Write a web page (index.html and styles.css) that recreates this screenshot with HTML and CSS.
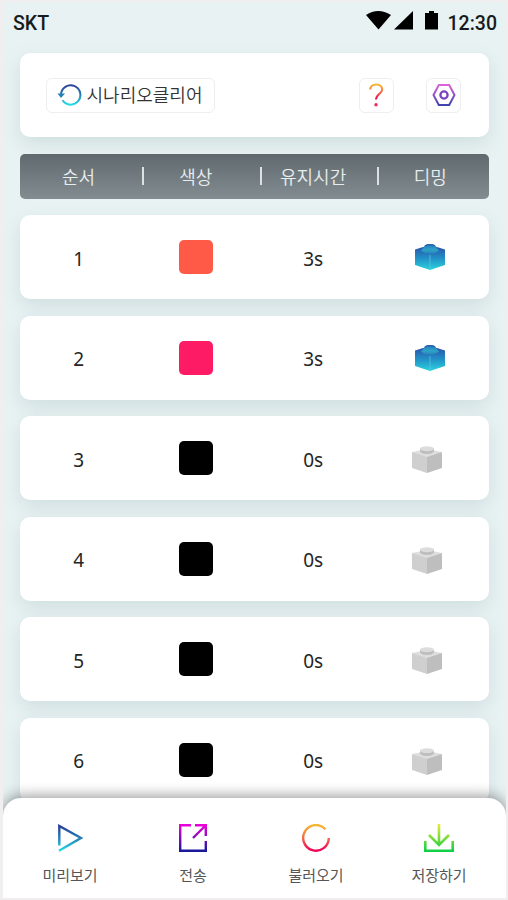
FILE: index.html
```
<!DOCTYPE html>
<html lang="ko">
<head>
<meta charset="utf-8">
<title>시나리오</title>
<link rel="stylesheet" href="styles.css">
</head>
<body>
<svg class="defs" aria-hidden="true">
  <defs>
    <linearGradient id="blue" x1="0" y1="0" x2="0" y2="1"><stop offset="0" stop-color="#2b3f99"/><stop offset=".5" stop-color="#2680b5"/><stop offset="1" stop-color="#20dce8"/></linearGradient>
    <linearGradient id="warm" x1="0" y1="0" x2="0" y2="1"><stop offset="0" stop-color="#f5b82e"/><stop offset=".5" stop-color="#f36a45"/><stop offset="1" stop-color="#f00058"/></linearGradient>
    <linearGradient id="violet" x1="0" y1="0" x2="0" y2="1"><stop offset="0" stop-color="#ea00d9"/><stop offset="1" stop-color="#18189b"/></linearGradient>
    <linearGradient id="soft" x1="0" y1="0" x2="0" y2="1"><stop offset="0" stop-color="#dd63da"/><stop offset="1" stop-color="#3f43b0"/></linearGradient>
    <linearGradient id="green" gradientUnits="userSpaceOnUse" x1="0" y1="0" x2="0" y2="28"><stop offset="0" stop-color="#ece83c"/><stop offset=".5" stop-color="#7bdb3d"/><stop offset="1" stop-color="#08cf49"/></linearGradient>
    <linearGradient id="brick" gradientUnits="userSpaceOnUse" x1="0" y1="6" x2="0" y2="28"><stop offset="0" stop-color="#2b5aad"/><stop offset=".45" stop-color="#218fc6"/><stop offset="1" stop-color="#2cd3dd"/></linearGradient>
    <linearGradient id="stud" x1="0" y1="0" x2="0" y2="1"><stop offset="0" stop-color="#2c70b8"/><stop offset=".6" stop-color="#2ba5c8"/><stop offset="1" stop-color="#2b84bd"/></linearGradient>
    <symbol id="brick-on" viewBox="0 0 32 30">
      <path d="M1 7.5 9 5h14l8 2.5V23l-15 5-15-5z" fill="url(#brick)"/>
      <path d="M7 8.5Q9 7 10 4.5 11 2 16 2t6 2.5q1 2.5 3 4-3 3-9 3t-9-3z" fill="url(#stud)"/>
      <path d="M11 3.7q5-2 10 0" fill="none" stroke="#2760ac" stroke-width="1.2"/>
      <path d="M16 13v14" stroke="#62c9e2" stroke-width=".7"/>
    </symbol>
    <symbol id="brick-off" viewBox="0 0 32 30">
      <path d="M1 8 16 5l15 3-15 6z" fill="#dedede"/>
      <path d="m1 8 15 5v16L1 24z" fill="#cfcfcf"/>
      <path d="m31 8-15 5v16l15-5z" fill="#bebebe"/>
      <path d="M9 4.5v3q2 2.5 7 2.5t7-2.5v-3z" fill="#bdbdbd"/>
      <ellipse cx="16" cy="4.8" rx="7" ry="2.5" fill="#dcdcdc"/>
    </symbol>
  </defs>
</svg>
<div class="screen">
  <header class="status">
    <span>SKT</span>
    <div class="signals">
      <svg width="80" height="24" viewBox="0 0 80 24"><path d="M2 6q12-8 25 0L14.500 20.500zM30 20.500 49 2v18.500zM61 4h4V2h5v2h4v16.500H61z"/></svg>
      <span>12:30</span>
    </div>
  </header>
  <section class="toolbar card">
    <button class="clear">
      <svg width="25" height="24" viewBox="0 0 25 24" fill="none" stroke="url(#blue)" stroke-width="2"><path d="M4 11.500A9.700 9.700 0 1 1 5.600 17.300"/><path d="M.5 10.500h7.500L4 15z" fill="#2680b5" stroke="none"/></svg>
      <span>시나리오클리어</span>
    </button>
    <button class="square help">
      <svg width="16" height="24" viewBox="0 0 16 24" fill="none" stroke="url(#warm)" stroke-width="2"><path d="M1.200 6.500C1.200 3.200 3.700 1.400 7.200 1.400s6 2 6 5.200c0 4-6.200 4.700-6.200 10"/><circle cx="7" cy="21.700" r="1.700" fill="#ef2a5e" stroke="none"/></svg>
    </button>
    <button class="square">
      <svg width="24" height="24" viewBox="0 0 24 24" fill="none" stroke="url(#soft)" stroke-width="2"><path d="M6.800 2h10.400L22.500 12l-5.300 10H6.800L1.500 12z"/><circle cx="12" cy="12" r="3.600" stroke="#7d43bd" stroke-width="2.300"/></svg>
    </button>
  </section>
  <div class="head">
    <span class="cell">순서</span><i class="sep"></i>
    <span class="cell">색상</span><i class="sep"></i>
    <span class="cell">유지시간</span><i class="sep"></i>
    <span class="cell">디밍</span>
  </div>
  <main class="list">
    <div class="row card"><span>1</span><i class="swatch coral"></i><span>3s</span><svg class="brick"><use href="#brick-on"/></svg></div>
    <div class="row card"><span>2</span><i class="swatch pink"></i><span>3s</span><svg class="brick"><use href="#brick-on"/></svg></div>
    <div class="row card"><span>3</span><i class="swatch"></i><span>0s</span><svg class="brick off"><use href="#brick-off"/></svg></div>
    <div class="row card"><span>4</span><i class="swatch"></i><span>0s</span><svg class="brick off"><use href="#brick-off"/></svg></div>
    <div class="row card"><span>5</span><i class="swatch"></i><span>0s</span><svg class="brick off"><use href="#brick-off"/></svg></div>
    <div class="row card"><span>6</span><i class="swatch"></i><span>0s</span><svg class="brick off"><use href="#brick-off"/></svg></div>
  </main>
  <nav class="tabs">
    <div class="tab"><svg width="28" height="28" viewBox="0 0 28 28" fill="none" stroke="url(#blue)" stroke-width="2.4"><path d="M3.300 21.500V2L25 14 3 26.700"/></svg><span>미리보기</span></div>
    <div class="tab"><svg width="28" height="28" viewBox="0 0 28 28" fill="none" stroke="url(#violet)" stroke-width="2.4"><path d="M12 1.200H1.200v25.600h25.600V17M16 1.200h10.800V12M26.500 1.500 14 14"/></svg><span>전송</span></div>
    <div class="tab"><svg width="28" height="28" viewBox="0 0 28 28" fill="none" stroke="url(#warm)" stroke-width="2.4"><path d="M23.400 5.200A12.800 12.800 0 1 0 26.800 14"/></svg><span>불러오기</span></div>
    <div class="tab"><svg width="30" height="28" viewBox="0 0 30 28" fill="none" stroke="url(#green)" stroke-width="2.6"><path d="M1.300 17v9.700h27.400V17M15 0v20.500M5 11l10 10 10-10"/></svg><span>저장하기</span></div>
  </nav>
</div>
</body>
</html>
```
FILE: styles.css
```
* {
  box-sizing: border-box;
}

body {
  margin: 0;
  height: 900px;
  overflow: hidden;
  font-family: "Noto Sans", "Noto Sans CJK KR", sans-serif;
  color: #252525;
}

.defs {
  position: absolute;
  width: 0;
  height: 0;
}

.screen {
  display: flex;
  flex-direction: column;
  height: 900px;
  padding: 0 17px;
  border: solid #f1eef0;
  border-width: 2px 2px 2px 3px;
  background: #e8f2f3;
  overflow: hidden;
}

.status {
  display: flex;
  flex: none;
  justify-content: space-between;
  align-items: center;
  height: 41px;
  margin: 0 -8px 0 -7px;
  padding-top: 2px;
  font: 500 19.5px/1 Roboto, sans-serif;
  color: #171b1d;
}

.signals {
  display: flex;
  align-items: center;
  gap: 4px;
}

.signals svg {
  margin-top: -6px;
  fill: #000;
}

.card {
  border-radius: 10px;
  background: #fff;
  box-shadow: 0 7px 18px rgba(135, 160, 165, .23);
}

.toolbar {
  display: flex;
  flex: none;
  align-items: center;
  height: 84px;
  margin-top: 10px;
  padding: 0 28px 0 26px;
}

button {
  display: flex;
  align-items: center;
  justify-content: center;
  height: 35px;
  padding: 0;
  border: 1.5px solid #eeeeef;
  border-radius: 6px;
  background: #fff;
  color: #333;
}

.clear {
  gap: 5px;
  width: 169px;
  padding-right: 2px;
  font: 350 18px/1 "Noto Sans CJK KR", sans-serif;
}

.clear span {
  margin-top: -2px;
}

.square {
  width: 35px;
}

.help {
  margin: 0 32px 0 auto;
}

.head {
  display: flex;
  flex: none;
  align-items: center;
  height: 45px;
  margin: 17px 0 16px;
  padding-bottom: 2px;
  border-radius: 5px;
  background: linear-gradient(#606a6e, #838d91);
  color: #e8edef;
  font: 350 18px/1 "Noto Sans CJK KR", sans-serif;
}

.cell {
  flex: 1;
  text-align: center;
}

.sep {
  width: 2px;
  height: 18px;
  margin: 0 -7px 0 5px;
  background: #dce1e2;
}

.list {
  display: flex;
  flex: 1;
  flex-direction: column;
  gap: 16.6px;
  min-height: 0;
}

.row {
  display: grid;
  flex: none;
  grid-template-columns: repeat(4, 1fr);
  place-items: center;
  height: 84px;
  font-size: 19px;
}

.row span {
  padding-top: 3px;
}

.swatch {
  width: 34px;
  height: 34px;
  border-radius: 5px;
  background: #000;
}

.coral {
  background: #ff5947;
}

.pink {
  background: #fd1b66;
}

.brick {
  width: 32px;
  height: 30px;
}

.brick.off {
  margin: 2px 6px 0 0;
}

.tabs {
  position: relative;
  display: grid;
  flex: none;
  grid-template-columns: repeat(4, 123px);
  justify-content: center;
  height: 100px;
  margin: 0 -17px;
  padding-top: 26px;
  border-radius: 18px 18px 0 0;
  background: #fff;
  box-shadow: 0 -2px 14px rgba(0, 0, 0, .4);
}

.tab {
  display: flex;
  flex-direction: column;
  align-items: center;
  gap: 15px;
  font: 400 15px/1 "Noto Sans CJK KR", sans-serif;
  color: #555;
}
```
